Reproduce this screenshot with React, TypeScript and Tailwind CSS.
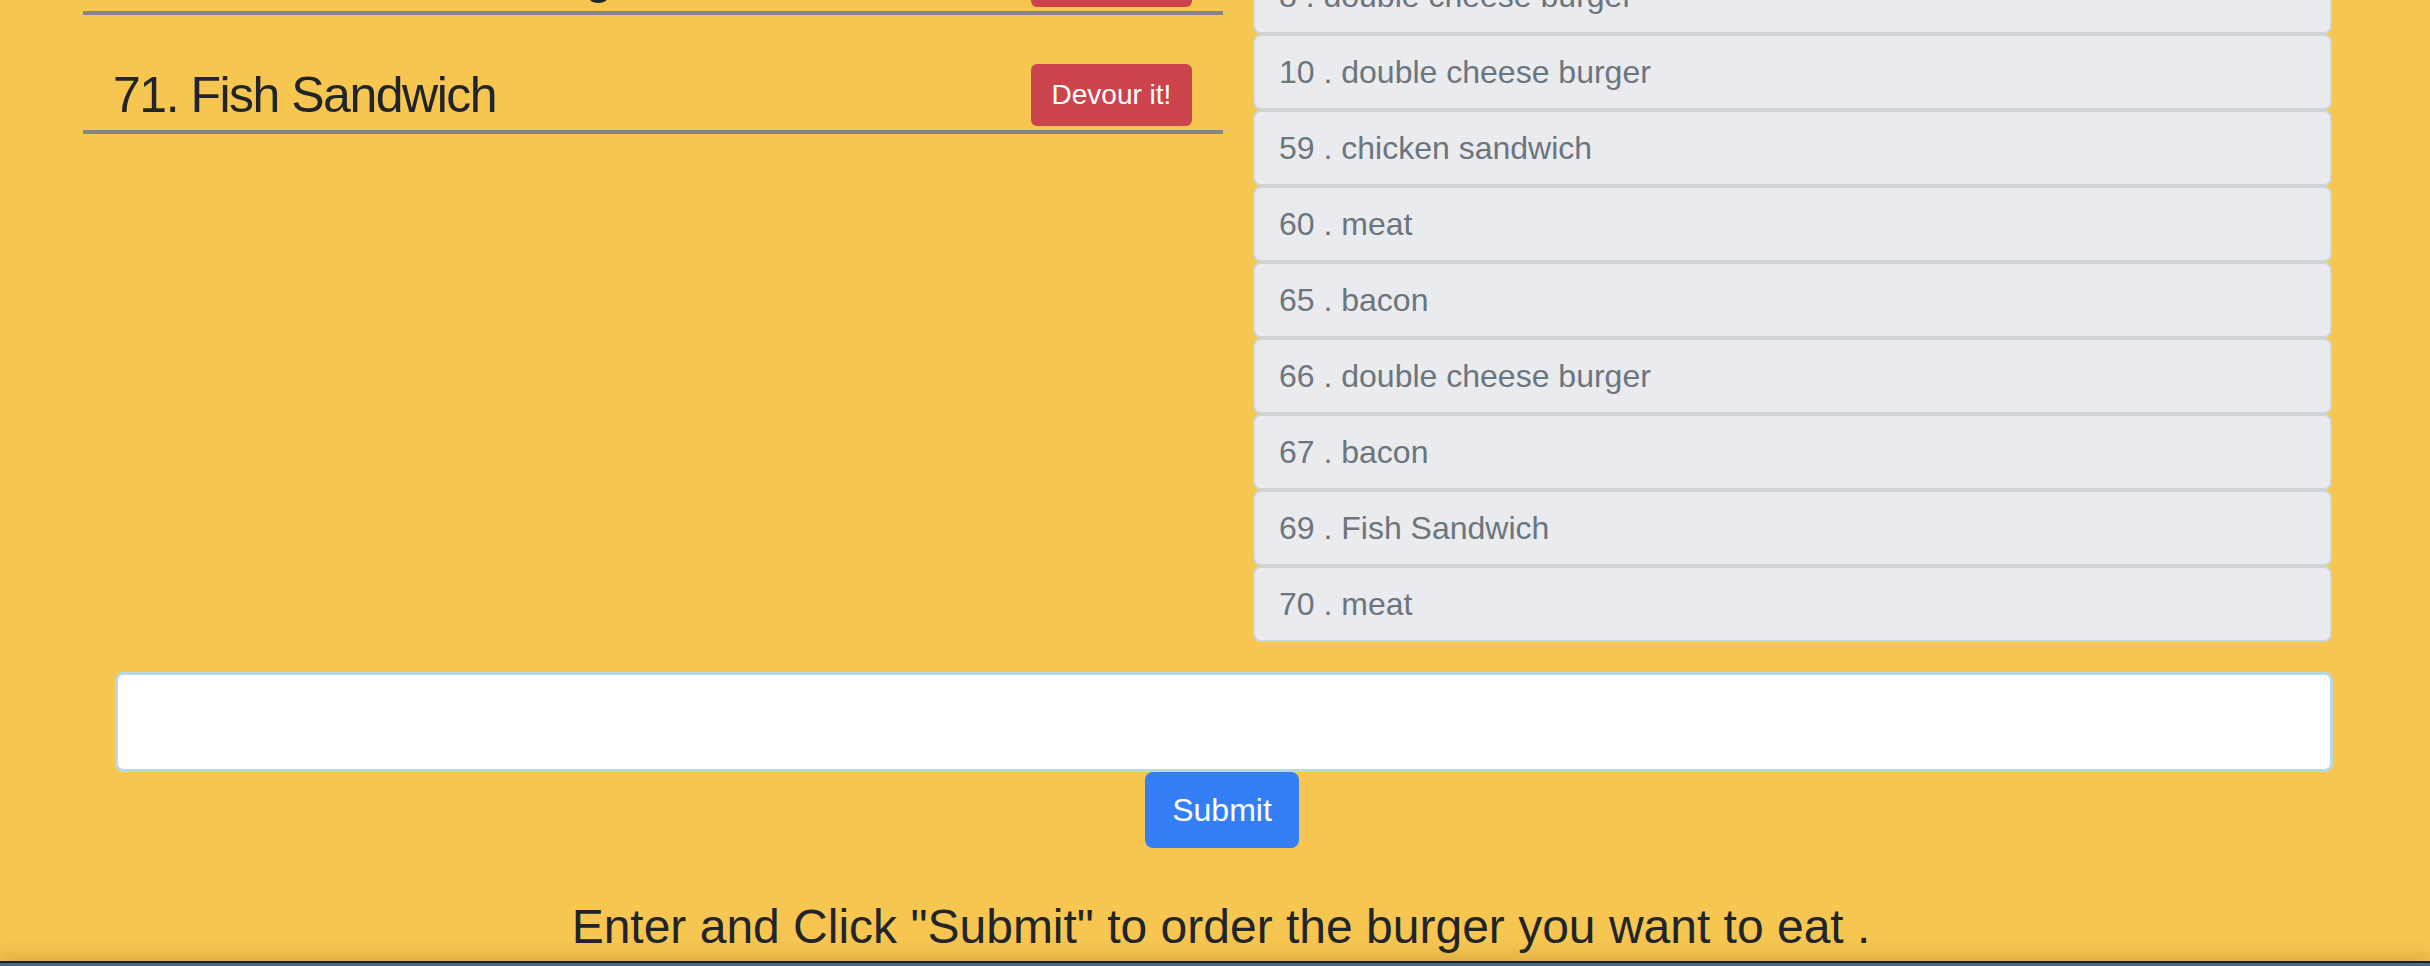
import React from 'react';

type Burger = { id: number; name: string };

// burgers still waiting to be eaten (left column)
const waiting: Burger[] = [
  { id: 68, name: 'Double cheese burger' },
  { id: 71, name: 'Fish Sandwich' },
];

// burgers already devoured (right column)
const devoured: Burger[] = [
  { id: 8, name: 'double cheese burger' },
  { id: 10, name: 'double cheese burger' },
  { id: 59, name: 'chicken sandwich' },
  { id: 60, name: 'meat' },
  { id: 65, name: 'bacon' },
  { id: 66, name: 'double cheese burger' },
  { id: 67, name: 'bacon' },
  { id: 69, name: 'Fish Sandwich' },
  { id: 70, name: 'meat' },
];

function WaitingRow({ burger }: { burger: Burger }) {
  return (
    <div className="flex h-[119px] items-end border-b-4 border-[#848484] pb-[4px] pl-[30px] pr-[31px]">
      <div className="flex h-[62px] flex-1 items-center justify-between">
        <h2 className="whitespace-nowrap text-[50px] leading-[60px] tracking-[-1.5px]">
          {burger.id}. {burger.name}
        </h2>
        <button
          type="button"
          className="h-[62px] w-[161px] rounded-[6px] bg-[#cc444b] text-[28px] leading-none text-white"
        >
          Devour it!
        </button>
      </div>
    </div>
  );
}

export default function App() {
  return (
    <div className="h-[966px] w-[2430px] overflow-hidden bg-[#f6c651] font-['Liberation_Sans',Arial,sans-serif] text-[#212529]">
      {/* Two columns */}
      <div className="flex items-start pl-[83px]">
        <div className="-mt-[104px] w-[1140px]">
          {waiting.map((b) => (
            <WaitingRow key={b.id} burger={b} />
          ))}
        </div>

        <ul className="-mt-[42px] ml-[30px] w-[1079px]">
          {devoured.map((b) => (
            <li
              key={b.id}
              className="flex h-[76px] items-center rounded-[8px] border-2 border-[#ced4d9] bg-[#e9ebef] pl-[24px] text-[32px] text-[#6c757d]"
            >
              {b.id} . {b.name}
            </li>
          ))}
        </ul>
      </div>

      {/* Order form */}
      <div className="ml-[115px] mt-[30px] w-[2218px]">
        <input
          type="text"
          className="block h-[100px] w-full rounded-[8px] border-[3px] border-[#b8d8e6] bg-white px-4 text-[32px] outline-none"
        />
        <div className="flex justify-center pr-[4px]">
          <button
            type="button"
            className="h-[76px] w-[154px] rounded-[8px] bg-[#347ff5] text-[32px] leading-none text-white"
          >
            Submit
          </button>
        </div>
        <p className="mt-[50px] whitespace-nowrap pr-[6px] text-center text-[48px] leading-[58px]">
          Enter and Click "Submit" to order the burger you want to eat .
        </p>
      </div>

      {/* Footer edge */}
      <div className="mt-[5px] h-[40px] border-t-2 border-[#1c1f22] bg-[#4a6886] shadow-[0_-8px_14px_rgba(120,80,0,0.18)]" />
    </div>
  );
}
